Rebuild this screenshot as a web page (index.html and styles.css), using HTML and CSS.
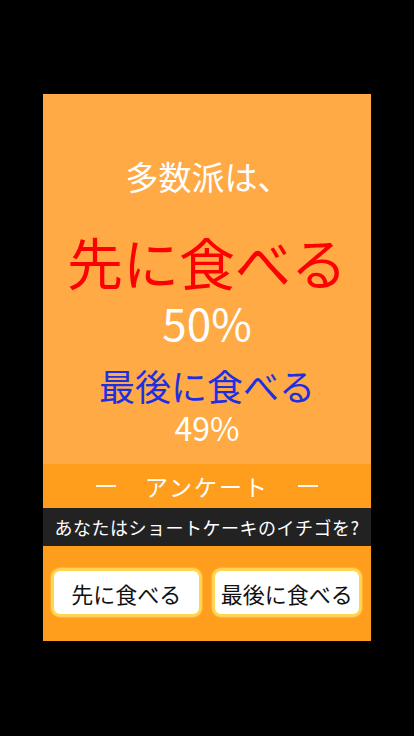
FILE: index.html
```html
<!DOCTYPE html>
<html lang="ja">
<head>
<meta charset="utf-8">
<title>アンケート結果</title>
<link rel="stylesheet" href="styles.css">
</head>
<body>
<div class="panel">
  <section class="result">
    <p class="lead">多数派は、</p>
    <p class="winner">先に食べる</p>
    <p class="winner-pct">50%</p>
    <p class="loser">最後に食べる</p>
    <p class="loser-pct">49%</p>
  </section>
  <div class="survey-head"><span class="dash"></span><span class="survey-title">アンケート</span><span class="dash"></span></div>
  <div class="question">あなたはショートケーキのイチゴを?</div>
  <div class="choices">
    <button class="choice">先に食べる</button>
    <button class="choice">最後に食べる</button>
  </div>
</div>
</body>
</html>
```
FILE: styles.css
```css
html, body {
  margin: 0;
  padding: 0;
  background: #000;
}
body {
  width: 414px;
  height: 736px;
  padding-top: 94px;
  box-sizing: border-box;
  font-family: "Noto Sans CJK JP", "Noto Sans", sans-serif;
}
.panel {
  margin-left: 43px;
  width: 328px;
  height: 547px;
  display: flex;
  flex-direction: column;
  background: #ff9d1c;
}
.result {
  height: 370px;
  background: #ffaa44;
  display: flex;
  flex-direction: column;
  align-items: center;
  padding-top: 62px;
  box-sizing: border-box;
  color: #fff;
}
.result p {
  margin: 0;
  white-space: nowrap;
}
.lead {
  font-size: 33px;
  line-height: 40px;
  padding-left: 2px;
}
.winner {
  margin-top: 33px !important;
  font-size: 56px;
  line-height: 64px;
  color: #ff0000;
}
.winner-pct {
  margin-top: 5px !important;
  font-size: 44px;
  line-height: 48px;
}
.loser {
  margin-top: 17px !important;
  font-size: 36px;
  line-height: 44px;
  color: #1f2fe0;
}
.loser-pct {
  margin-top: 3px !important;
  font-size: 32px;
  line-height: 34px;
}
.survey-head {
  height: 44px;
  display: flex;
  align-items: center;
  justify-content: center;
  gap: 29px;
  color: #fff;
  font-size: 23px;
}
.survey-title {
  letter-spacing: 2px;
  padding-bottom: 1px;
}
.dash {
  width: 20px;
  height: 2px;
  background: #fff6ea;
}
.question {
  height: 38px;
  background: #222;
  color: #fff;
  font-size: 18px;
  letter-spacing: 0.5px;
  display: flex;
  align-items: center;
  justify-content: center;
  white-space: nowrap;
}
.choices {
  flex: 1;
  display: flex;
  gap: 12px;
  padding: 23px 10px 0 9px;
}
.choice {
  flex: 1;
  height: 47px;
  background: #fff;
  border: 2px solid #ffd84a;
  border-radius: 8px;
  box-shadow: 0 0 2px 1px #ffe27a;
  font-family: "Noto Sans CJK JP", "Noto Sans", sans-serif;
  font-size: 22px;
  color: #111;
  padding: 0;
}
```
